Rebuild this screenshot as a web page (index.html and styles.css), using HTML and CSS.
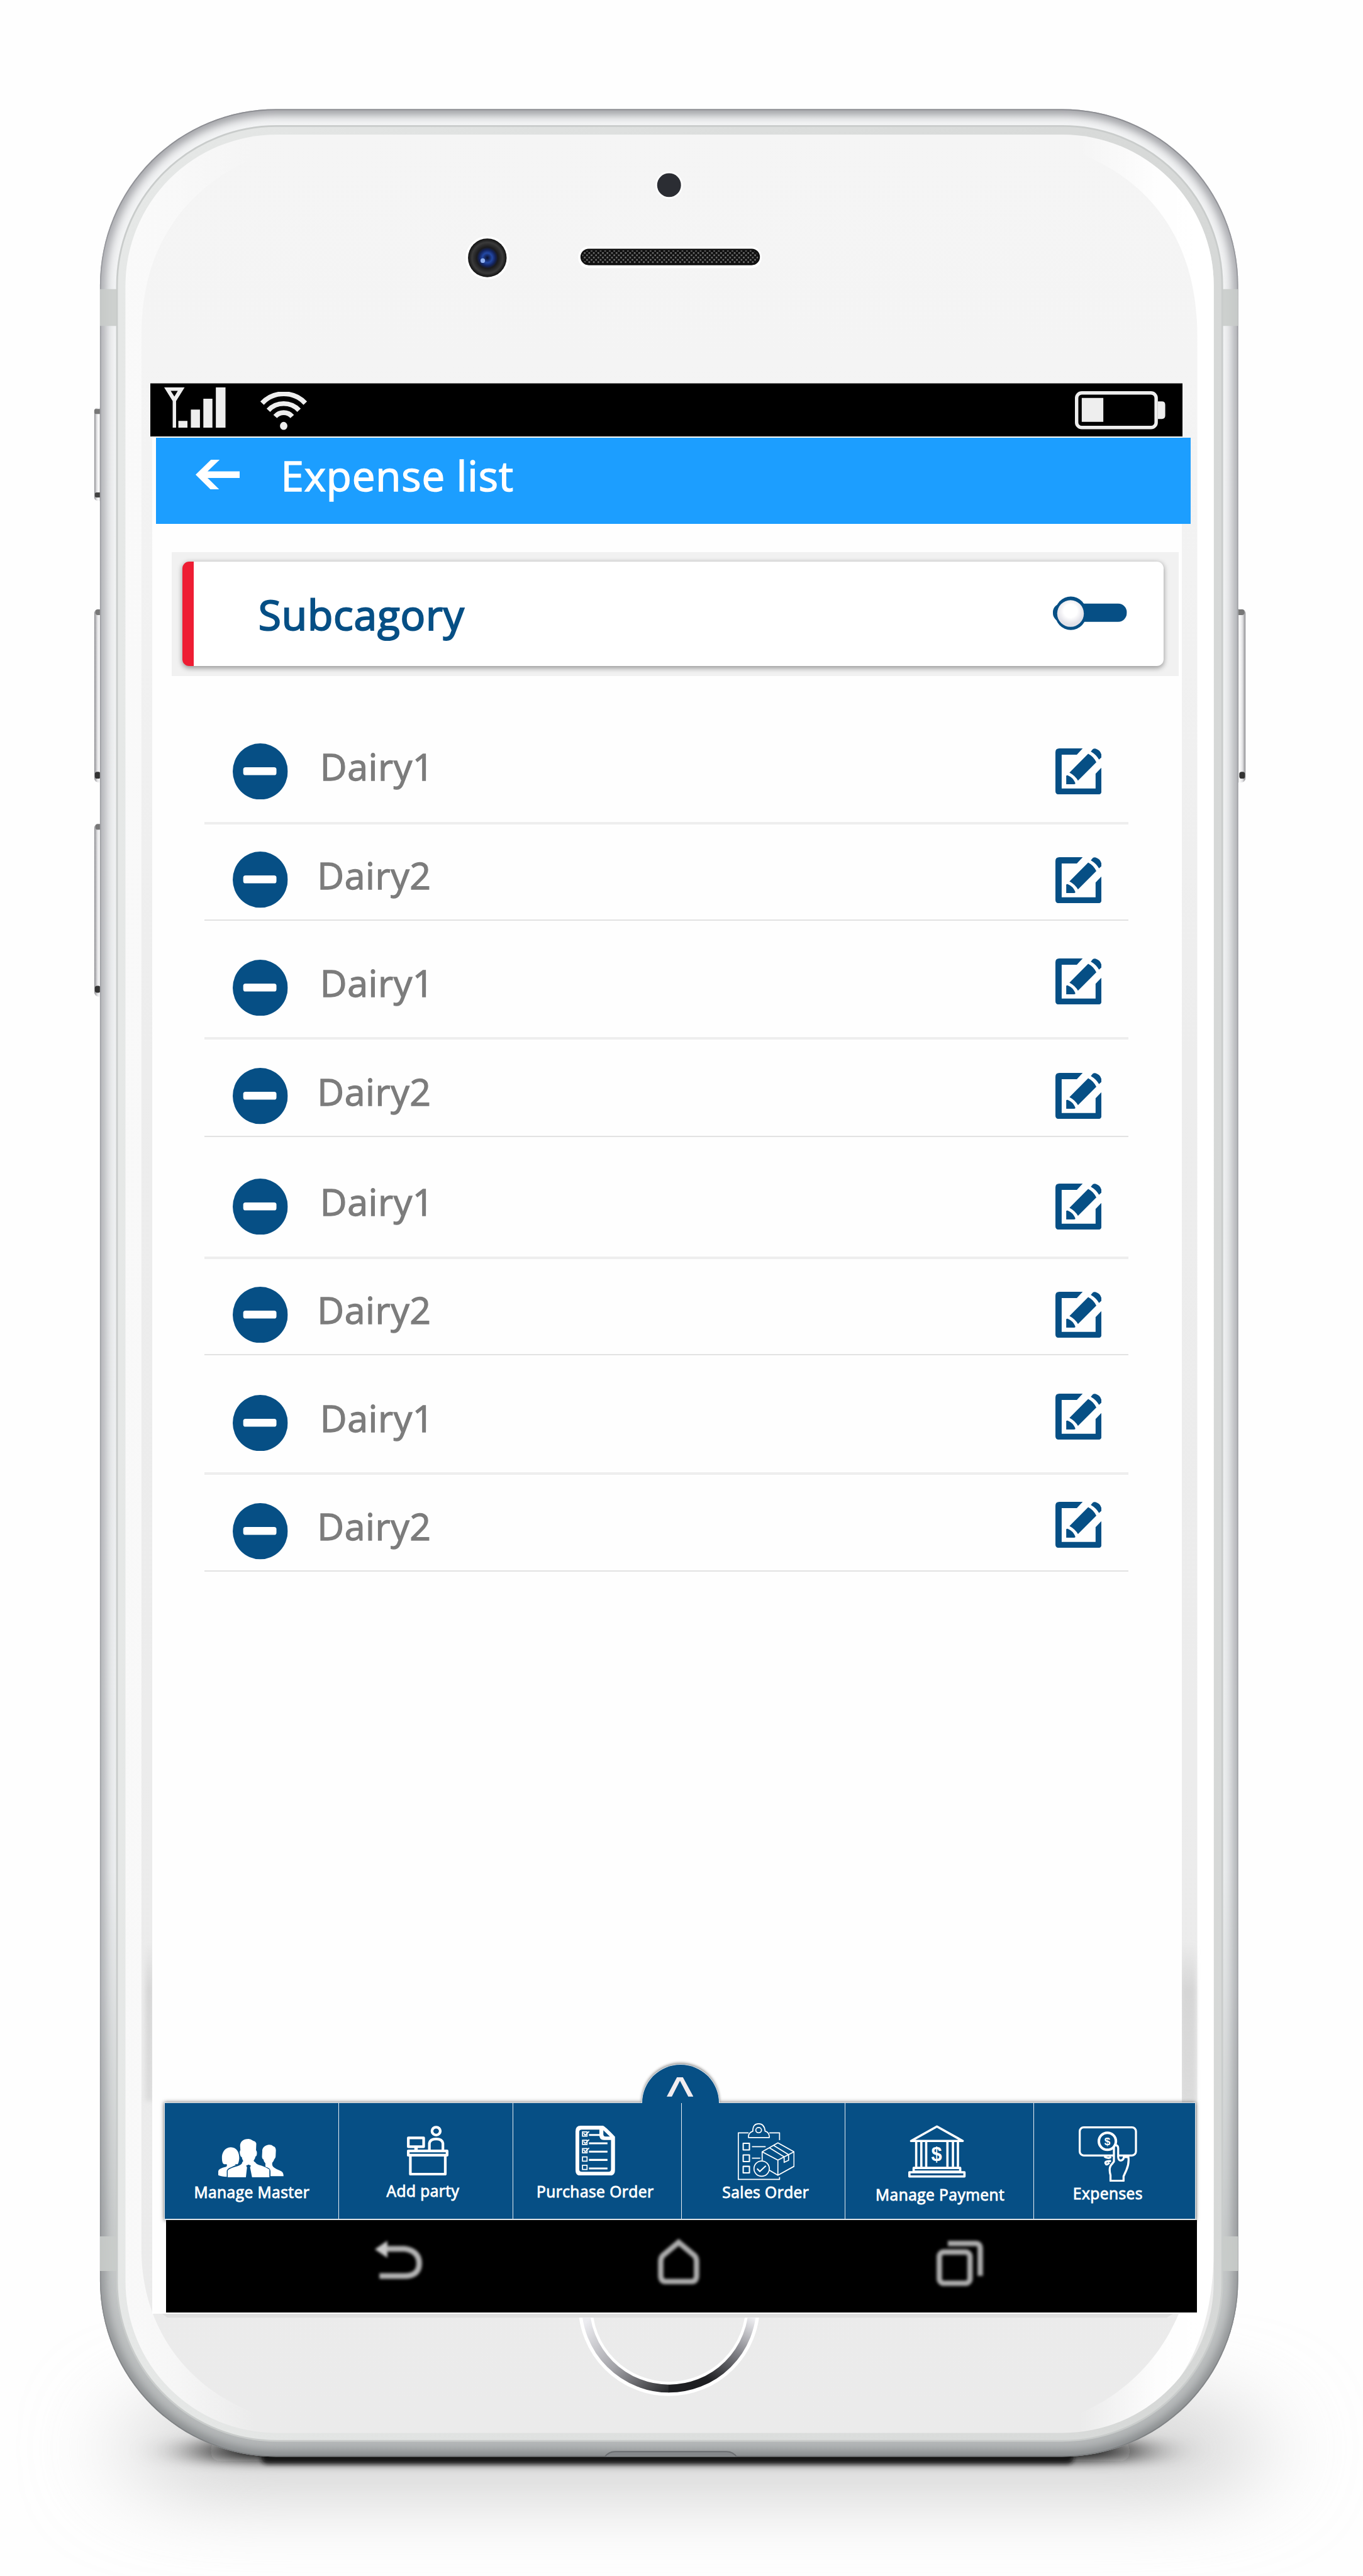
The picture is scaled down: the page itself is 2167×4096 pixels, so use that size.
FILE: index.html
```html
<!DOCTYPE html>
<html lang="en">
<head>
<meta charset="utf-8">
<title>Expense list</title>
<link rel="stylesheet" href="styles.css">
</head>
<body>
<div class="stage">
  <svg class="device" viewBox="0 0 2400 4536" preserveAspectRatio="none" aria-hidden="true">
    <defs>
      <linearGradient id="metal" x1="0" y1="192" x2="0" y2="4326" gradientUnits="userSpaceOnUse">
        <stop offset="0" stop-color="#f3f4f5"/><stop offset=".75" stop-color="#eceeef"/><stop offset=".9" stop-color="#c9cccc"/><stop offset="1" stop-color="#b3b6b7"/>
      </linearGradient>
      <linearGradient id="edge" x1="0" y1="192" x2="0" y2="4326" gradientUnits="userSpaceOnUse">
        <stop offset="0" stop-color="#8b8c91"/><stop offset=".1" stop-color="#9fa0a5"/><stop offset=".8" stop-color="#a2a4a8"/><stop offset="1" stop-color="#7d8082"/>
      </linearGradient>
      <linearGradient id="panel" x1="0" y1="237" x2="0" y2="4284" gradientUnits="userSpaceOnUse">
        <stop offset="0" stop-color="#f5f5f5"/><stop offset=".1" stop-color="#f4f4f4"/><stop offset=".4" stop-color="#ededed"/><stop offset="1" stop-color="#ebebeb"/>
      </linearGradient>
      <linearGradient id="ring" x1="206" y1="0" x2="2152" y2="0" gradientUnits="userSpaceOnUse">
        <stop offset="0" stop-color="#e6e8e7"/><stop offset=".5" stop-color="#dddfde"/><stop offset="1" stop-color="#d6d8d7"/>
      </linearGradient>
      <linearGradient id="glowL" x1="249" y1="0" x2="450" y2="0" gradientUnits="userSpaceOnUse">
        <stop offset="0" stop-color="#fafafa" stop-opacity=".9"/><stop offset=".3" stop-color="#fafafa" stop-opacity=".75"/><stop offset="1" stop-color="#fafafa" stop-opacity="0"/>
      </linearGradient>
      <linearGradient id="glowR" x1="1900" y1="0" x2="2108" y2="0" gradientUnits="userSpaceOnUse">
        <stop offset="0" stop-color="#fff" stop-opacity="0"/><stop offset=".65" stop-color="#fff" stop-opacity=".9"/><stop offset="1" stop-color="#fff"/>
      </linearGradient>
      <linearGradient id="home" x1="1040" y1="4080" x2="1170" y2="4215" gradientUnits="userSpaceOnUse">
        <stop offset="0" stop-color="#ececf0"/><stop offset=".5" stop-color="#a2a2a7"/><stop offset="1" stop-color="#2a2b2e"/>
      </linearGradient>
      <linearGradient id="homeR" x1="1325" y1="4080" x2="1255" y2="4195" gradientUnits="userSpaceOnUse">
        <stop offset="0" stop-color="#f0f0f3"/><stop offset=".45" stop-color="#8d8d93"/><stop offset="1" stop-color="#1e1f22"/>
      </linearGradient>
      <linearGradient id="key" x1="0" y1="0" x2="1" y2="0">
        <stop offset="0" stop-color="#8e8e92"/><stop offset=".2" stop-color="#e4e4e6"/><stop offset=".4" stop-color="#fff"/><stop offset=".5" stop-color="#88898c"/><stop offset=".65" stop-color="#cdd1d3"/><stop offset="1" stop-color="#9da1a4"/>
      </linearGradient>
      <linearGradient id="keyR" x1="1" y1="0" x2="0" y2="0">
        <stop offset="0" stop-color="#8e8e92"/><stop offset=".2" stop-color="#e4e4e6"/><stop offset=".4" stop-color="#fff"/><stop offset=".5" stop-color="#88898c"/><stop offset=".65" stop-color="#cdd1d3"/><stop offset="1" stop-color="#9da1a4"/>
      </linearGradient>
      <linearGradient id="sideShade" x1="0" y1="3420" x2="0" y2="3700" gradientUnits="userSpaceOnUse">
        <stop offset="0" stop-color="#c4c4c4" stop-opacity="0"/><stop offset=".3" stop-color="#c4c4c4" stop-opacity=".55"/><stop offset="1" stop-color="#c4c4c4" stop-opacity=".4"/>
      </linearGradient>
      <radialGradient id="lens"><stop offset="0" stop-color="#0b0f2a"/><stop offset=".25" stop-color="#2348a4"/><stop offset=".42" stop-color="#13235c"/><stop offset=".55" stop-color="#1b1b1d"/><stop offset=".8" stop-color="#3a3a3a"/><stop offset="1" stop-color="#111"/></radialGradient>
      <pattern id="mesh" width="8" height="8" patternUnits="userSpaceOnUse"><rect width="8" height="8" fill="#111"/><path d="M0 0h3v3h-3zM4 4h3v3h-3z" fill="#686868"/></pattern>
      <filter id="b4" x="-20%" y="-60%" width="140%" height="220%"><feGaussianBlur stdDeviation="4"/></filter>
      <filter id="b9" x="-20%" y="-20%" width="140%" height="140%"><feGaussianBlur stdDeviation="9"/></filter>
      <filter id="contact" x="-20%" y="-300%" width="140%" height="700%"><feGaussianBlur stdDeviation="60 10"/></filter>
      <filter id="soft" x="-30%" y="-150%" width="160%" height="400%"><feGaussianBlur stdDeviation="95 70"/></filter>
      <clipPath id="bodyClip"><rect x="176" y="192" width="2004" height="4134" rx="310"/></clipPath>
      <clipPath id="panelClip"><rect x="221" y="237" width="1916" height="4047" rx="266"/></clipPath>
      <clipPath id="homeClip"><rect x="1000" y="4081" width="360" height="160"/></clipPath>
    </defs>
    <rect x="240" y="4230" width="1960" height="160" rx="80" fill="#cfcfcf" filter="url(#soft)"/>
    <rect x="370" y="4298" width="1620" height="36" rx="18" fill="#0c0c0c" filter="url(#contact)"/>
    <rect x="460" y="4312" width="1430" height="26" rx="10" fill="#161616" filter="url(#b4)"/>

    <rect x="166" y="718" width="22" height="164" rx="6" fill="url(#key)"/>
    <rect x="166" y="720" width="14" height="9" rx="3" fill="#777"/><rect x="167" y="867" width="12" height="9" rx="3" fill="#444"/>
    <rect x="166" y="1072" width="28" height="306" rx="8" fill="url(#key)"/>
    <rect x="168" y="1073" width="18" height="10" rx="4" fill="#777"/><rect x="167" y="1359" width="10" height="12" rx="4" fill="#333"/>
    <rect x="166" y="1450" width="28" height="305" rx="8" fill="url(#key)"/>
    <rect x="168" y="1451" width="18" height="10" rx="4" fill="#777"/><rect x="167" y="1736" width="10" height="12" rx="4" fill="#333"/>
    <rect x="2165" y="1072" width="28" height="306" rx="8" fill="url(#keyR)"/>
    <rect x="2173" y="1073" width="18" height="10" rx="4" fill="#777"/><rect x="2182" y="1359" width="10" height="12" rx="4" fill="#333"/>

    <rect x="176" y="192" width="2004" height="4134" rx="310" fill="url(#metal)"/>
    <g clip-path="url(#bodyClip)">
      <rect x="176" y="192" width="2004" height="4134" rx="310" fill="none" stroke="url(#edge)" stroke-width="18" filter="url(#b9)"/>
      <rect x="176" y="192" width="2004" height="4134" rx="310" fill="none" stroke="url(#edge)" stroke-width="4"/>
      <path d="M176 509h30v65h-30zM2150 509h30v65h-30zM176 3938h30v61h-30zM2150 3938h30v61h-30z" fill="#c9ccca" opacity=".9"/>
      <path d="M1063 4330q6-13 20-13h196q14 0 20 13" fill="#85888b" stroke="#6b6e71" stroke-width="2"/>
    </g>
    <rect x="206" y="222" width="1946" height="4076" rx="281" fill="url(#ring)" stroke="#c9cccb" stroke-width="3"/>
    <rect x="221" y="237" width="1916" height="4047" rx="266" fill="url(#panel)"/>
    <g clip-path="url(#panelClip)">
      <path d="M215 225H446V279C330 330 249 430 249 590V3960C249 4090 320 4200 450 4250V4300H215Z" fill="url(#glowL)"/>
      <path d="M2145 225H1900V270C2030 320 2108 430 2108 590V3900C2108 4060 2040 4190 1900 4250V4290C2060 4270 2137 4140 2137 3960Z" fill="url(#glowR)"/>
    </g>
    <path d="M2078 3420h28v280h-28zM256 3420h14v280h-14z" fill="url(#sideShade)" filter="url(#b4)"/>
    <path d="M285 4074H2066L2054 4081H295Z" fill="#dedede"/>

    <circle cx="1178" cy="326" r="24" fill="#fff"/><circle cx="1178" cy="326" r="21" fill="#2b2d33"/>
    <circle cx="858" cy="454" r="38" fill="#fff"/><circle cx="858" cy="454" r="34" fill="url(#lens)"/>
    <circle cx="850" cy="459" r="4" fill="#8fb0f0"/>
    <rect x="1018" y="434" width="323" height="38" rx="18" fill="#fff"/>
    <rect x="1023.500" y="439.500" width="313" height="26" rx="13" fill="url(#mesh)" stroke="#111" stroke-width="3"/>

    <g clip-path="url(#homeClip)" fill="none">
      <circle cx="1178" cy="4059" r="147.500" stroke="#fff" stroke-width="25"/>
      <path d="M1031 4059A147 147 0 0 0 1178 4206" stroke="url(#home)" stroke-width="14"/>
      <path d="M1325 4059A147 147 0 0 1 1177 4206" stroke="url(#homeR)" stroke-width="14"/>
    </g>
  </svg>

  <main class="screen">
    <div class="status">
      <svg class="status-signal" viewBox="0 0 108 71"><path fill="#eee" fill-rule="evenodd" d="M0 0H36L21 24V71H15V24ZM11.500 6L18 16L24 6Z"/><path fill="#eee" d="M25 59h16v12h-16zM47 39h16v32h-16zM69 20h16v51h-16zM91 0h17v71h-17z"/></svg>
      <svg class="status-wifi" viewBox="0 0 82 68"><g fill="none" stroke="#eee" stroke-width="8.500"><path d="M3 20A52 52 0 0 1 79 20"/><path d="M14 32.500A37 37 0 0 1 68 32.500"/><path d="M26 43.500A20 20 0 0 1 56 43.500"/></g><ellipse cx="41" cy="60" rx="6.500" ry="7" fill="#eee"/></svg>
      <svg class="status-battery" viewBox="0 0 160 67"><rect x="3" y="3" width="140" height="61" rx="9" fill="none" stroke="#eee" stroke-width="6"/><path fill="#eee" d="M12 12h38v42h-38zM146 18h7q6 0 6 6v19q0 6-6 6h-7z"/></svg>
    </div>

    <header class="bar">
      <svg class="back" viewBox="0 0 78 53"><path fill="#fff" d="M0 26.400L27 0H42.300L21 20.600H78V32H21L42.300 53H27Z"/></svg>
      <h1>Expense list</h1>
    </header>

    <div class="card-tray">
      <section class="card">
        <h2>Subcagory</h2>
        <svg class="toggle" viewBox="0 0 130 60">
          <defs><radialGradient id="knob" cx=".5" cy=".4"><stop offset=".5" stop-color="#fff"/><stop offset="1" stop-color="#e2e1e8"/></radialGradient></defs>
          <rect x="0" y="13" width="130" height="32" rx="15" fill="#064f85"/><ellipse cx="31.500" cy="30" rx="28" ry="29.500" fill="#064f85"/><circle cx="31" cy="30.500" r="23.500" fill="url(#knob)"/>
        </svg>
      </section>
    </div>

    <svg class="symbols" aria-hidden="true">
      <symbol id="minus" viewBox="0 0 97 99"><ellipse cx="48.500" cy="49.500" rx="48.500" ry="49.500" fill="#064f85"/><rect x="18.500" y="42" width="58.500" height="14" rx="4" fill="#fff"/></symbol>
      <symbol id="edit" viewBox="0 0 81 81"><g fill="#064f85"><path d="M48 0H7Q0 0 0 7V75Q0 81 6 81H76Q81 81 81 76V34L70.700 44.600V70.700H11V11H37.700Z"/><path d="M57.700 9.300Q67 14 72 24.300L39.700 56.800Q35 48 24.700 42.500Z"/><path d="M19 49Q19 47 22 47.500Q31 51 35 61Q35.500 63.200 33 63.200H19Z"/><path d="M62.300 5.400L66 1Q68 0 71 .5Q79 3 81 11V16L76.700 19.600Q72 11 62.300 5.400Z"/></g></symbol>
    </svg>

    <ul class="list">
      <li class="row"><svg class="minus"><use href="#minus"/></svg><span class="name">Dairy1</span><svg class="edit"><use href="#edit"/></svg></li>
      <li class="row"><svg class="minus"><use href="#minus"/></svg><span class="name">Dairy2</span><svg class="edit"><use href="#edit"/></svg></li>
      <li class="row"><svg class="minus"><use href="#minus"/></svg><span class="name">Dairy1</span><svg class="edit"><use href="#edit"/></svg></li>
      <li class="row"><svg class="minus"><use href="#minus"/></svg><span class="name">Dairy2</span><svg class="edit"><use href="#edit"/></svg></li>
      <li class="row"><svg class="minus"><use href="#minus"/></svg><span class="name">Dairy1</span><svg class="edit"><use href="#edit"/></svg></li>
      <li class="row"><svg class="minus"><use href="#minus"/></svg><span class="name">Dairy2</span><svg class="edit"><use href="#edit"/></svg></li>
      <li class="row"><svg class="minus"><use href="#minus"/></svg><span class="name">Dairy1</span><svg class="edit"><use href="#edit"/></svg></li>
      <li class="row"><svg class="minus"><use href="#minus"/></svg><span class="name">Dairy2</span><svg class="edit"><use href="#edit"/></svg></li>
    </ul>

    <nav class="tabs">
      <div class="handle"><svg viewBox="0 0 47 34"><path fill="#f1ecef" d="M0 34L18 0H28.500L47 34H38L23.300 6L9 34Z"/></svg></div>
      <a class="tab tab-master">
        <svg viewBox="0 0 115 68"><g fill="#fff"><path d="M22 14.700C11 15 6 25 6.500 34Q6.500 43 10 44.700H15Q16 48 14 49Q0 52 0 57V64Q6 66.700 15 66.700V56Q16 52 22 50L31 46L29 44.700H34Q36 43 37 34C37 24 33 15 22 14.700Z"/><path d="M89 10.300C82 11 77 16 77.500 22L77 31Q77 35 79.500 36Q80 40 83 43V49Q92 51 92 57V65.700H115Q115 58 109 56Q96 51 95 46V42Q98 39 98.500 36Q101 34 101 31L101.500 20C101 14 99 14 97 13Q94 10 89 10.300Z"/><path d="M53.500 0C43 0 38 6 38.500 13L39 20Q37 22 38.500 28Q39 31 41.500 32Q42 36 44 39Q41 42 42 43Q39 47 30 49Q17 53 16.700 56V68H48.600L50.600 50L49 47L53.500 45L57.500 47L56 50L59.600 68H90V54Q87 51 76 47Q67 45 65 41Q62 40 62.500 38Q65 35 65.500 31Q68 30 68 26Q68.500 22 66.500 20L67 8C65 3 62 4 61 3Q57 0 53.500 0Z"/></g></svg>
        <span>Manage Master</span></a>
      <a class="tab tab-party">
        <svg viewBox="0 0 73 88"><g fill="none" stroke="#fff" stroke-width="4.700" stroke-linejoin="round"><ellipse cx="51.400" cy="9.500" rx="7.300" ry="7"/><path d="M39.500 42V31Q41 23.500 51.400 23.500T63.300 31V42"/><rect x="2.400" y="21.500" width="27" height="15.500"/><path d="M16 37V43" stroke-width="6"/><rect x="2.300" y="44.500" width="68.400" height="7.500"/><path d="M6 53V85.300H67.500V53"/></g></svg>
        <span>Add party</span></a>
      <a class="tab tab-purchase">
        <svg viewBox="0 0 69.500 88"><path fill="#fff" fill-rule="evenodd" d="M9 0H48Q51 0 69.500 19.300V78Q69.500 88 60 88H9Q0 88 0 78V10Q0 0 9 0ZM11 7Q6.500 7 6.500 11V77Q6.500 81 11 81H58Q62.500 81 62.500 77V25.300H50Q42 25 42 17V7ZM49 8V15Q49 19 53 19H60.500Z"/><g fill="none" stroke="#fff"><path stroke-width="3.500" d="M23.700 16.300H43M23.700 31H56.300M23.700 45.700H56.300M23.700 60.300H56.300M23.700 75.300H56.300"/><path stroke-width="1.900" d="M12.300 11h8v7.500h-8zM12.300 25.600h8v7.500h-8zM12.300 40.200h8v7.500h-8zM12.300 55h8v7.500h-8zM12.300 69.600h8v7.500h-8zM14 13l3 3.500 7-6.500M14 27.600l3 3.500 7-6.500M14 42.200l3 3.500 7-6.500"/></g></svg>
        <span>Purchase Order</span></a>
      <a class="tab tab-sales">
        <svg viewBox="0 0 100 100"><g fill="none" stroke="#fff" stroke-width="1.900" stroke-linejoin="round"><path d="M19 17H.9V99H73.500V95M55.500 17H73.500V30M18.800 25.300H55.500V23Q55 16 48 14Q47 1 36.700 1T26.500 14Q19 17 18.800 23Z"/><ellipse cx="36.700" cy="12.300" rx="5" ry="4.600"/><path d="M9.500 35.500h11v11.500h-11zM9.500 56h11v11.500h-11zM9.500 76h11v11.500h-11z" stroke-width="2.300"/><path d="M25 41.300H49M25 61.700H39.600M42.900 66V50.300L70.600 34.700L99 50.300V76L70.600 91.700L55.500 82.700M42.900 50.300L70.600 65L99 50.300M70.600 65V91.700M63 39L89.400 55.300V65.300L81.600 69V59.300L55.500 43.300"/><ellipse cx="42" cy="80" rx="13.500" ry="13.500"/><path d="M34 80L38.800 85L49.400 75" stroke-width="2.300"/></g></svg>
        <span>Sales Order</span></a>
      <a class="tab tab-payment">
        <svg viewBox="0 0 101 92.500"><g fill="none" stroke="#fff" stroke-width="4" stroke-linejoin="round"><path d="M50.500 2.500L5 28H96ZM14 29V74M23 29V74M31.600 29V74M69 29V74M78.700 29V74M87.500 29V74"/><path d="M9.500 75.500h82v6.500h-82zM2 83h97v7.500h-97z"/></g><text class="glyph" x="50" y="63" font-size="34">$</text></svg>
        <span>Manage Payment</span></a>
      <a class="tab tab-expenses">
        <svg viewBox="0 0 103 98"><g fill="none" stroke="#fff" stroke-width="3.600" stroke-linejoin="round"><rect x="1.800" y="1.800" width="99" height="49.500" rx="7"/><ellipse cx="50.500" cy="26.300" rx="15" ry="15" stroke-width="4.500"/><path d="M45 53Q52 58 57 54M57 61Q46 61 47 65Q49 70 54 64"/><path fill="#064f85" d="M62 62V38Q62 33.500 65.500 33.500T69.500 38V54Q70 61 75 60Q79 59 79.500 54H87.500Q89 66 84 77L79 88V96H56V86Q52 72 59 66Z"/></g><text class="glyph" x="50.500" y="33" font-size="19">$</text></svg>
        <span>Expenses</span></a>
    </nav>

    <div class="softkeys">
      <svg class="key-back" viewBox="0 0 84 72"><path d="M22 14H52Q78 18 78 40T52 62H8" fill="none" stroke="#b4b4b4" stroke-width="10"/><path d="M0 15L22 0V30Z" fill="#cacaca"/></svg>
      <svg class="key-home" viewBox="0 0 73 82"><path d="M36.500 6L65 30Q68 34 68 40V66Q67 75 60 75H13Q6 75 5 66V40Q5 34 8 30Z" fill="none" stroke="#adadad" stroke-width="9.500"/></svg>
      <svg class="key-recent" viewBox="0 0 84 84"><rect x="6" y="22" width="54" height="55" rx="8" fill="none" stroke="#adadad" stroke-width="9.500"/><path d="M21 7H70Q78 7 78 16V64" fill="none" stroke="#adadad" stroke-width="9.500"/></svg>
    </div>
  </main>
</div>
</body>
</html>
```
FILE: styles.css
```css
/* 1rem is 100 design units; the design is 24rem wide. */
html { font-size: 90.3px; }
body { margin: 0; background: #fff; font-family: "Open Sans", "Noto Sans", sans-serif; overflow: hidden; }
h1, h2, ul { margin: 0; padding: 0; }
svg { display: block; flex: none; }

.stage { position: relative; display: flow-root; width: 24rem; height: 45.36rem; overflow: hidden; background: #fefefe; }
.device { position: absolute; left: 0; top: 0; width: 24rem; height: 45.36rem; }

.screen {
  position: relative; box-sizing: border-box; display: flex; flex-direction: column;
  width: 18.13rem; height: 33.99rem; margin: 6.75rem 0 0 2.68rem; padding-bottom: .02rem;
  background: #fefefe;
}

.status { display: flex; align-items: flex-start; height: .94rem; width: 18.17rem; margin-left: -.03rem; background: #000; box-shadow: 0 -1px 0 #8b8b8b; flex: none; }
.status-signal { width: 1.08rem; height: .71rem; margin: .075rem 0 0 .245rem; }
.status-wifi { width: .82rem; height: .68rem; margin: .145rem 0 0 .61rem; }
.status-battery { width: 1.6rem; height: .67rem; margin: .14rem .29rem 0 auto; }

.bar { display: flex; align-items: flex-start; flex: none; width: 18.21rem; height: 1.52rem; margin: .02rem 0 0 .07rem; background: #1c9eff; color: #fff; }
.back { width: .78rem; height: .53rem; margin: .38rem 0 0 .69rem; }
.bar h1 { font-size: .725rem; line-height: 1; font-weight: 400; letter-spacing: .0095rem; -webkit-text-stroke: .016rem currentColor; margin: .292rem 0 0 .725rem; white-space: nowrap; }

.card-tray { box-sizing: border-box; flex: none; width: 17.73rem; height: 2.18rem; margin: .49rem 0 0 .34rem; padding: .165rem .26rem .17rem .19rem; background: #f1f1f1; }
.card { box-sizing: border-box; display: flex; align-items: flex-start; height: 1.845rem; background: #fff; border-left: .21rem solid #ee1d33; border-radius: .12rem; box-shadow: 0 .03rem .1rem rgba(0,0,0,.4); }
.card h2 { font-size: .73rem; line-height: 1; font-weight: 400; letter-spacing: .009rem; -webkit-text-stroke: .023rem currentColor; color: #064f85; margin: .575rem 0 0 1.14rem; white-space: nowrap; }
.toggle { width: 1.3rem; height: .6rem; margin: .61rem .65rem 0 auto; }

.symbols { position: absolute; width: 0; height: 0; }
.list { list-style: none; flex: none; width: 16.27rem; margin-left: .92rem; }
.row { box-sizing: border-box; display: flex; align-items: flex-start; height: var(--h); padding-top: var(--top); border-bottom: .03rem solid #e2e2e2; }
.minus { width: .97rem; height: .99rem; margin-left: .5rem; }
.name { font-size: .654rem; line-height: 1; letter-spacing: .006rem; -webkit-text-stroke: .014rem currentColor; color: #7c7c7c; margin: .08rem 0 0 .565rem; }
.row:nth-child(even) .name { margin-left: .515rem; }
.edit { width: .81rem; height: .81rem; margin: var(--edit) .48rem 0 auto; }
.row:nth-child(odd) { border-bottom: .05rem solid #eee; }
.row:nth-child(1) { --h: 2.62rem; --top: 1.19rem; --edit: .09rem; }
.row:nth-child(2) { --h: 1.69rem; --top: .48rem; --edit: .09rem; }
.row:nth-child(3) { --h: 2.1rem; --top: .69rem; --edit: -.02rem; }
.row:nth-child(4) { --h: 1.71rem; --top: .5rem; --edit: .08rem; }
.row:nth-child(5) { --h: 2.15rem; --top: .73rem; --edit: .09rem; }
.row:nth-child(6) { --h: 1.7rem; --top: .49rem; --edit: .09rem; }
.row:nth-child(7) { --h: 2.1rem; --top: .69rem; --edit: -.02rem; }
.row:nth-child(8) { --h: 1.71rem; --top: .5rem; --edit: -.02rem; }

.tabs { position: relative; box-sizing: border-box; flex: none; display: grid; grid-template-columns: 3.06rem 3.07rem 2.97rem 2.88rem 3.315rem 1fr; width: 18.16rem; height: 2.07rem; margin: auto 0 0 .215rem; background: #064f85; border: 1px solid #dfe5ea; border-bottom-width: 2px; box-shadow: 0 0 .07rem rgba(0,0,0,.6); }
.tab { display: flex; flex-direction: column; align-items: flex-start; color: #fff; border-left: 1px solid #e8eef3; margin-left: -1px; }
.tab-master { border-left-color: transparent; }
.tab span { font-size: .272rem; line-height: 1; letter-spacing: .005rem; -webkit-text-stroke: .01rem currentColor; white-space: nowrap; }
.glyph { font-family: "Liberation Sans", sans-serif; font-weight: 700; fill: #fff; text-anchor: middle; }

.tab-master svg { width: 1.15rem; height: .68rem; margin: .63rem 0 0 .94rem; }
.tab-master span { margin: .13rem 0 0 .51rem; }
.tab-party svg { width: .73rem; height: .88rem; margin: .4rem 0 0 1.2rem; }
.tab-party span { margin: .135rem 0 0 .84rem; }
.tab-purchase svg { width: .695rem; height: .88rem; margin: .4rem 0 0 1.1rem; }
.tab-purchase span { margin: .155rem 0 0 .41rem; }
.tab-sales svg { width: 1rem; height: 1rem; margin: .36rem 0 0 .98rem; }
.tab-sales span { margin: .085rem 0 0 .71rem; }
.tab-payment svg { width: 1.01rem; height: .925rem; margin: .39rem 0 0 1.11rem; }
.tab-payment span { margin: .17rem 0 0 .53rem; }
.tab-expenses svg { width: 1.03rem; height: .98rem; margin: .41rem 0 0 .79rem; }
.tab-expenses span { margin: .07rem 0 0 .69rem; }

.handle { position: absolute; left: 8.39rem; bottom: 100%; box-sizing: border-box; width: 1.37rem; height: .69rem; padding: .23rem 0 0 .43rem; background: #064f85; border: 1px solid #dfe5ea; border-bottom: 0; border-radius: .685rem .685rem 0 0; box-shadow: 0 -.02rem .05rem rgba(0,0,0,.45); clip-path: inset(-.2rem -.2rem 0 -.2rem); }
.handle svg { width: .47rem; height: .34rem; }

.softkeys { flex: none; display: flex; align-items: flex-start; width: 18.15rem; height: 1.63rem; margin-left: .24rem; background: #000; }
.softkeys svg { filter: blur(2px); }
.key-back { width: .84rem; height: .72rem; margin: .37rem 0 0 3.68rem; }
.key-home { width: .73rem; height: .82rem; margin: .33rem 0 0 4.14rem; }
.key-recent { width: .84rem; height: .84rem; margin: .34rem 0 0 4.165rem; }
```
